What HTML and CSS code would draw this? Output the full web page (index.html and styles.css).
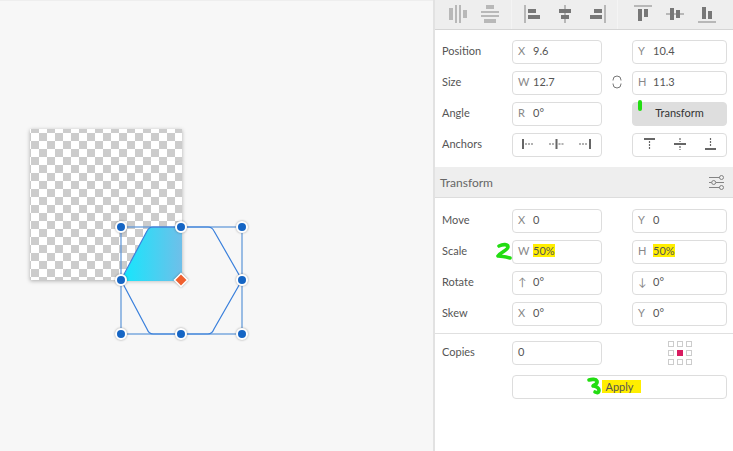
FILE: index.html
```html
<!DOCTYPE html>
<html lang="en">
<head>
    <meta charset="UTF-8" />
    <title>Transform</title>
    <link rel="stylesheet" href="styles.css">
</head>
<body>

<div class="canvas">
    <div class="artboard"></div>
    <svg class="selection" width="433" height="451">
        <defs>
            <linearGradient id="fillGrad" x1="0" y1="0" x2="1" y2="0">
                <stop offset="0" stop-color="#12e8fd"/>
                <stop offset="1" stop-color="#6fbfe9"/>
            </linearGradient>
        </defs>
        <path d="M121 281 L147 231 Q149 227 153 227 L182 227 L182 281 Z" fill="url(#fillGrad)"/>
        <rect x="121" y="227" width="121" height="107" fill="none" stroke="#5b94d8" stroke-width="1.2"/>
        <path d="M121 280 L147 231 Q149 227 153 227 L208 227 Q212 227 214 231 L242 280 L214 329 Q212 334 208 334 L153 334 Q149 334 147 329 Z" fill="none" stroke="#3a80dc" stroke-width="1.2"/>
        <g class="handles" fill="#1565c4" stroke="#fff" stroke-width="2">
            <circle cx="121" cy="227" r="5"/>
            <circle cx="181" cy="227" r="5"/>
            <circle cx="242" cy="227" r="5"/>
            <circle cx="121" cy="280" r="5"/>
            <circle cx="242" cy="280" r="5"/>
            <circle cx="121" cy="334" r="5"/>
            <circle cx="181" cy="334" r="5"/>
            <circle cx="242" cy="334" r="5"/>
        </g>
        <path class="handles" d="M181 273.5 L187.5 280 L181 286.5 L174.5 280 Z" fill="#f0602f" stroke="#fff" stroke-width="1.5"/>
    </svg>
</div>

<div class="panel">
    <div class="toolbar">
        <svg class="tb-icon" width="18" height="18" viewBox="0 0 18 18"><g fill="#b8b8b8"><rect x="0" y="3" width="4" height="12"/><rect x="6" y="0" width="2" height="18"/><rect x="10" y="0" width="2" height="18"/><rect x="14" y="5" width="4" height="8"/></g></svg>
        <svg class="tb-icon" width="18" height="18" viewBox="0 0 18 18"><g fill="#b8b8b8"><rect x="5" y="0" width="8" height="4"/><rect x="0" y="6" width="18" height="2"/><rect x="0" y="10" width="18" height="2"/><rect x="3" y="14" width="12" height="4"/></g></svg>
        <span class="tb-sep first"></span>
        <svg class="tb-icon" width="18" height="18" viewBox="0 0 18 18"><rect x="0" y="0" width="2" height="18" fill="#b8b8b8"/><g fill="#777"><rect x="4" y="4" width="8" height="4"/><rect x="4" y="10" width="12" height="4"/></g></svg>
        <svg class="tb-icon" width="18" height="18" viewBox="0 0 18 18"><rect x="8" y="0" width="2" height="18" fill="#b8b8b8"/><g fill="#777"><rect x="3" y="4" width="12" height="4"/><rect x="5" y="10" width="8" height="4"/></g></svg>
        <svg class="tb-icon" width="18" height="18" viewBox="0 0 18 18"><rect x="16" y="0" width="2" height="18" fill="#b8b8b8"/><g fill="#777"><rect x="6" y="4" width="8" height="4"/><rect x="2" y="10" width="12" height="4"/></g></svg>
        <span class="tb-sep"></span>
        <svg class="tb-icon" width="18" height="18" viewBox="0 0 18 18"><rect x="0" y="0" width="18" height="2" fill="#b8b8b8"/><g fill="#777"><rect x="4" y="4" width="4" height="12"/><rect x="10" y="4" width="4" height="8"/></g></svg>
        <svg class="tb-icon" width="18" height="18" viewBox="0 0 18 18"><rect x="0" y="8" width="18" height="2" fill="#b8b8b8"/><g fill="#777"><rect x="4" y="3" width="4" height="12"/><rect x="10" y="5" width="4" height="8"/></g></svg>
        <svg class="tb-icon" width="18" height="18" viewBox="0 0 18 18"><rect x="0" y="16" width="18" height="2" fill="#b8b8b8"/><g fill="#777"><rect x="4" y="2" width="4" height="12"/><rect x="10" y="6" width="4" height="8"/></g></svg>
    </div>

    <div class="form first-form">
        <span class="lbl">Position</span>
        <div class="field"><span class="pre">X</span>9.6</div>
        <span></span>
        <div class="field"><span class="pre">Y</span>10.4</div>

        <span class="lbl">Size</span>
        <div class="field"><span class="pre">W</span>12.7</div>
        <svg class="link" width="10" height="14" viewBox="0 0 10 14" fill="none" stroke="#777" stroke-width="1"><path d="M1 5.5 V5 A4 4 0 0 1 9 5 V5.5"/><path d="M1 8.5 V9 A4 4 0 0 0 9 9 V8.5"/></svg>
        <div class="field"><span class="pre">H</span>11.3</div>

        <span class="lbl">Angle</span>
        <div class="field"><span class="pre">R</span>0°</div>
        <span></span>
        <div class="field btn-on">Transform</div>

        <span class="lbl">Anchors</span>
        <div class="field icons">
            <svg width="12" height="10" viewBox="0 0 12 10"><rect x="0" y="0" width="2" height="10" fill="#666"/><path d="M3 5 H12" stroke="#666" stroke-width="1.2" stroke-dasharray="2 1"/></svg>
            <svg width="15" height="10" viewBox="0 0 15 10"><rect x="6.5" y="0" width="2" height="10" fill="#666"/><path d="M0 5 H5.5 M9.5 5 H15" stroke="#666" stroke-width="1.2" stroke-dasharray="2 1"/></svg>
            <svg width="12" height="10" viewBox="0 0 12 10"><rect x="10" y="0" width="2" height="10" fill="#666"/><path d="M0 5 H9" stroke="#666" stroke-width="1.2" stroke-dasharray="2 1"/></svg>
        </div>
        <span></span>
        <div class="field icons right">
            <svg width="11" height="12" viewBox="0 0 11 12"><rect x="0" y="0" width="11" height="2" fill="#666"/><path d="M5.5 3 V12" stroke="#666" stroke-width="1.2" stroke-dasharray="2 1"/></svg>
            <svg width="12" height="12" viewBox="0 0 12 12"><rect x="0" y="5" width="12" height="2" fill="#666"/><path d="M6 0 V4 M6 8 V12" stroke="#666" stroke-width="1.2" stroke-dasharray="2 1"/></svg>
            <svg width="11" height="12" viewBox="0 0 11 12"><rect x="0" y="10" width="11" height="2" fill="#666"/><path d="M5.5 0 V9" stroke="#666" stroke-width="1.2" stroke-dasharray="2 1"/></svg>
        </div>
    </div>

    <div class="section">
        <span>Transform</span>
        <svg width="15" height="15" viewBox="0 0 15 15" fill="none" stroke="#777" stroke-width="0.9"><path d="M0 2.5 H10.5 M0 7.5 H2.5 M7 7.5 H15 M0 12.5 H10.5"/><circle cx="12.5" cy="2.5" r="2"/><circle cx="4.7" cy="7.5" r="2"/><circle cx="12.5" cy="12.5" r="2"/></svg>
    </div>

    <div class="form second-form">
        <span class="lbl">Move</span>
        <div class="field"><span class="pre">X</span>0</div>
        <span></span>
        <div class="field"><span class="pre">Y</span>0</div>

        <span class="lbl">Scale</span>
        <div class="field"><span class="pre">W</span><mark>50%</mark></div>
        <span></span>
        <div class="field"><span class="pre">H</span><mark>50%</mark></div>

        <span class="lbl">Rotate</span>
        <div class="field"><span class="pre">↑</span>0°</div>
        <span></span>
        <div class="field"><span class="pre">↓</span>0°</div>

        <span class="lbl">Skew</span>
        <div class="field"><span class="pre">X</span>0°</div>
        <span></span>
        <div class="field"><span class="pre">Y</span>0°</div>
    </div>

    <div class="form copies">
        <span class="lbl">Copies</span>
        <div class="field">0</div>
        <span></span>
        <div class="origin">
            <i></i><i></i><i></i>
            <i></i><i class="on"></i><i></i>
            <i></i><i></i><i></i>
        </div>
        <div class="field apply"><mark>Apply</mark></div>
    </div>

    <!-- green scribbles on top of the screenshot -->
    <span class="dash"></span>
    <svg class="scribble" width="298" height="451" fill="none" stroke="#22dd11" stroke-width="3.6" stroke-linecap="round" stroke-linejoin="round">
        <path d="M64 246 C68 244 73 244 73 247 C73 250 66 252 63 256 C66 256 71 257 75 258"/>
        <path d="M154 380 C157 379 161 379 162 381 C163 384 159 385 158 386 C161 386 164 388 164 390 C164 393 162 393 160 392"/>
    </svg>
</div>

</body>
</html>
```

FILE: styles.css
```css
html, body {
    margin: 0;
    height: 100%;
}
body {
    display: flex;
    width: 733px;
    height: 451px;
    overflow: hidden;
    font-family: Lato, Arial, sans-serif;
    font-size: 11px;
    color: #555;
    background: #fff;
}
.canvas {
    position: relative;
    width: 433px;
    flex: none;
    background: #f7f7f7;
    border-top: 1px solid #eee;
    box-sizing: border-box;
}
.artboard {
    position: absolute;
    left: 30px;
    top: 128px;
    width: 152px;
    height: 151px;
    background-color: #fff;
    background-image: conic-gradient(#ccc 25%, #fff 0 50%, #ccc 0 75%, #fff 0);
    background-size: 16px 16px;
    background-position: -7px -4px;
    box-shadow: 0 1px 4px rgba(0, 0, 0, 0.3);
}
.selection {
    position: absolute;
    left: 0;
    top: -1px;
}
.handles {
    filter: drop-shadow(0 0 1px rgba(0, 0, 0, 0.35));
}
.panel {
    position: relative;
    flex: 1;
    border-left: 2px solid #e2e2e2;
}
.toolbar {
    display: flex;
    align-items: flex-start;
    height: 29px;
    box-sizing: border-box;
    padding: 5px 0 0 14px;
    background: #eee;
}
.tb-icon {
    margin-right: 14px;
    flex: none;
}
.tb-sep {
    width: 1px;
    height: 29px;
    margin: -5px 16px 0 -3px;
    background: #f4f4f4;
}
.tb-sep.first {
    margin: -5px 12px 0 -2px;
}
.form {
    display: grid;
    grid-template-columns: 70px 90px 30px 95px;
    grid-auto-rows: 24px;
    row-gap: 7px;
    padding-left: 7px;
    align-items: center;
}
.first-form {
    border-top: 1px solid #d5d5d5;
    padding-top: 10px;
    padding-bottom: 10px;
}
.second-form {
    padding-top: 11px;
    padding-bottom: 7px;
}
.lbl {
    margin-bottom: 4px;
    color: #555;
}
.field {
    display: flex;
    align-items: center;
    height: 24px;
    box-sizing: border-box;
    padding: 0 0 4px 5px;
    border: 1px solid #ddd;
    border-radius: 4px;
    background: #fff;
}
.pre {
    width: 15px;
    flex: none;
    color: #888;
}
.btn-on {
    justify-content: center;
    padding-left: 0;
    background: #dedede;
    border-color: #dedede;
    color: #333;
}
.icons {
    justify-content: space-between;
    padding: 0 10px 3px 9px;
}
.icons.right {
    padding-left: 11px;
}
.link {
    justify-self: center;
    margin-bottom: 3px;
}
mark {
    background: #ffee00;
    color: #555;
}
.section {
    display: flex;
    align-items: center;
    justify-content: space-between;
    height: 31px;
    box-sizing: border-box;
    padding: 0 9px 0 5px;
    background: #eee;
    border-bottom: 1px solid #ddd;
    font-size: 12px;
    color: #666;
}
.copies {
    border-top: 1px solid #e0e0e0;
    padding-top: 7px;
    row-gap: 10px;
}
.origin {
    display: grid;
    grid-template-columns: repeat(3, 6px);
    grid-auto-rows: 6px;
    gap: 3px;
    justify-self: center;
    align-self: start;
}
.origin i {
    border: 1px solid #ccc;
    box-sizing: border-box;
}
.origin i.on {
    background: #d81b60;
    border-color: #d81b60;
}
.apply {
    grid-column: 2 / 5;
    justify-content: center;
    padding-left: 0;
    padding-bottom: 2px;
}
.apply mark {
    padding: 0 3px;
    box-shadow: 4px 0 #ffee00;
}
.dash {
    position: absolute;
    left: 203px;
    top: 100px;
    width: 4px;
    height: 11px;
    border-radius: 2px;
    background: #22dd11;
}
.scribble {
    position: absolute;
    left: 0;
    top: 0;
    pointer-events: none;
}
```
